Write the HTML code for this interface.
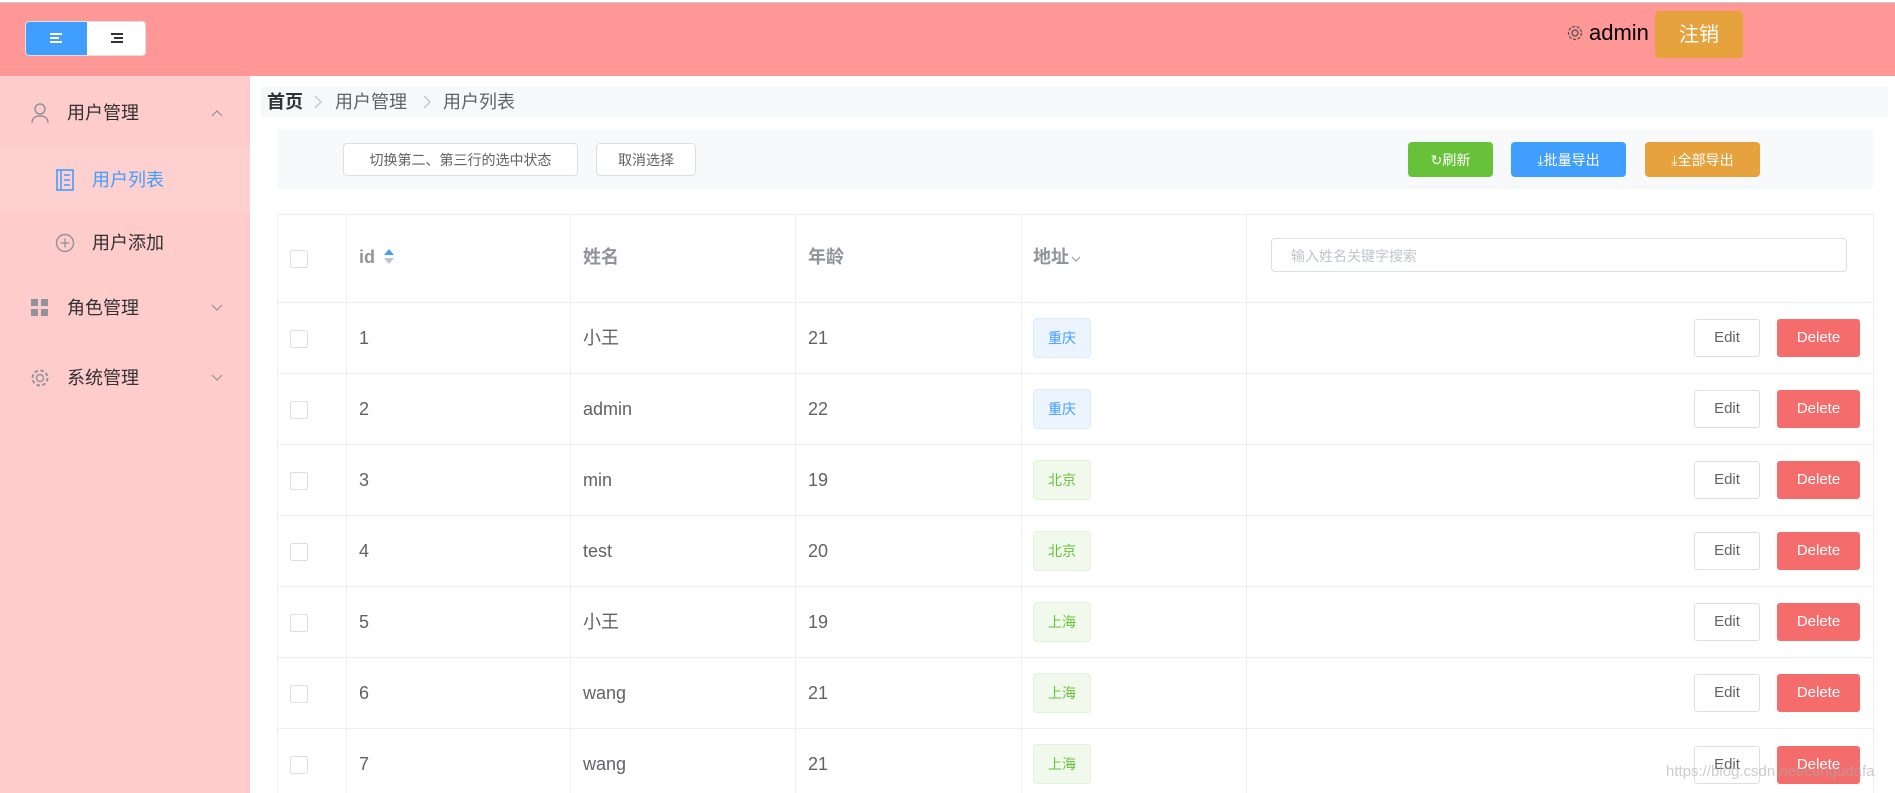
<!DOCTYPE html>
<html style="width:1895px;height:793px;overflow:hidden"><head><meta charset="utf-8"><style>
*{box-sizing:border-box;margin:0;padding:0}
body{width:1895px;height:793px;overflow:hidden;background:#fff;font-family:"Liberation Sans","Noto Sans CJK SC",sans-serif;position:relative;color:#606266;line-height:22px}
.a{position:absolute}
.hdr{left:0;top:0;width:1895px;height:76px;background:#ff9797;border-top:2px solid #fff;box-shadow:inset 0 1px 0 #ccc}
.side{left:0;top:76px;width:250px;height:717px;background:#ffcccc}
.mi{position:absolute;left:0;width:250px;font-size:18px;color:#303133;display:flex;align-items:center}
.btn{position:absolute;border-radius:4px;font-size:14px;display:flex;align-items:center;justify-content:center}
.cb{position:absolute;left:290px;width:18px;height:18px;border:1px solid #dcdfe6;border-radius:2px;background:#fff}
.txt{position:absolute;font-size:18px;color:#606266;height:22px;line-height:22px;overflow:visible;white-space:nowrap}
.tag{position:absolute;left:1033px;width:58px;height:40px;border-radius:4px;font-size:14px;display:flex;align-items:center;justify-content:center}
.blue{background:#ecf5ff;border:1px solid #d9ecff;color:#409eff}
.green{background:#f0f9eb;border:1px solid #e1f3d8;color:#67c23a}
.edit{position:absolute;left:1694px;width:66px;height:38px;border:1px solid #dcdfe6;border-radius:3px;background:#fff;font-size:15px;color:#606266;display:flex;align-items:center;justify-content:center}
.del{position:absolute;left:1777px;width:83px;height:38px;border-radius:3px;background:#f56c6c;font-size:15px;color:#fff;display:flex;align-items:center;justify-content:center}
.th{position:absolute;top:246px;font-size:18px;font-weight:bold;color:#909399;height:22px}
.vl{position:absolute;top:214px;width:1px;height:579px;background:#ebeef5}
.hl{position:absolute;left:277px;width:1597px;height:1px;background:#ebeef5}
</style></head><body>
<div class="a hdr"></div>
<div class="a" style="left:25px;top:21px;width:121px;height:35px;border-radius:4px;background:#fff;border:1px solid #dcdfe6;overflow:hidden">
 <div class="a" style="left:0;top:0;width:61px;height:35px;background:#409eff"></div>
 <svg class="a" style="left:24px;top:11px" width="14" height="12"><path d="M0 1h12M0 5h9M0 9h12" stroke="#fff" stroke-width="2"/></svg>
 <svg class="a" style="left:85px;top:11px" width="14" height="12"><path d="M0 1h12M3 5h9M0 9h12" stroke="#333" stroke-width="2"/></svg>
</div>
<svg class="a" style="left:1566px;top:24px" width="18" height="18" viewBox="0 0 18 18"><circle cx="9" cy="9" r="3" fill="none" stroke="#555" stroke-width="1.3"/><circle cx="9" cy="9" r="6.5" fill="none" stroke="#555" stroke-width="1.3" stroke-dasharray="3 1.6"/></svg>
<div class="a" style="left:1589px;top:21px;font-size:22px;color:#000;line-height:24px">admin</div>
<div class="btn" style="left:1655px;top:11px;width:88px;height:47px;background:#e6a23c;color:#fff;font-size:20px">注销</div>

<div class="a side"></div>
<div class="mi" style="top:80px;height:66px"><svg style="margin-left:30px" width="20" height="22" viewBox="0 0 20 22"><circle cx="10" cy="7" r="5" fill="none" stroke="#909399" stroke-width="1.5"/><path d="M2 21c0-5 3.5-7 8-7s8 2 8 7" fill="none" stroke="#909399" stroke-width="1.5"/></svg><span style="margin-left:17px">用户管理</span><svg style="position:absolute;left:211px" width="12" height="8"><path d="M1 7l5-5 5 5" fill="none" stroke="#909399" stroke-width="1.2"/></svg></div>
<div class="a" style="left:0;top:147px;width:250px;height:65px;background:#ffd0d0"></div>
<div class="mi" style="top:147px;height:65px;color:#409eff"><svg style="margin-left:56px" width="18" height="22" viewBox="0 0 18 22"><rect x="1" y="1" width="16" height="20" fill="none" stroke="#409eff" stroke-width="1.6"/><path d="M5 1v20M8 6h6M8 11h6M8 16h6" stroke="#409eff" stroke-width="1.5"/></svg><span style="margin-left:18px">用户列表</span></div>
<div class="mi" style="top:212px;height:62px"><svg style="margin-left:55px" width="20" height="20" viewBox="0 0 20 20"><circle cx="10" cy="10" r="8.5" fill="none" stroke="#909399" stroke-width="1.4"/><path d="M10 5.5v9M5.5 10h9" stroke="#909399" stroke-width="1.3"/></svg><span style="margin-left:17px">用户添加</span></div>
<div class="mi" style="top:276px;height:64px"><svg style="margin-left:31px" width="18" height="18"><rect x="0" y="0" width="7" height="7" fill="#909399"/><rect x="10" y="0" width="7" height="7" fill="#909399"/><rect x="0" y="10" width="7" height="7" fill="#909399"/><rect x="10" y="10" width="7" height="7" fill="#909399"/></svg><span style="margin-left:18px">角色管理</span><svg style="position:absolute;left:211px" width="12" height="8"><path d="M1 1l5 5 5-5" fill="none" stroke="#909399" stroke-width="1.2"/></svg></div>
<div class="mi" style="top:346px;height:64px"><svg style="margin-left:30px" width="20" height="20" viewBox="0 0 20 20"><circle cx="10" cy="10" r="3.5" fill="none" stroke="#909399" stroke-width="1.4"/><circle cx="10" cy="10" r="7.5" fill="none" stroke="#909399" stroke-width="2" stroke-dasharray="3.5 2.4"/></svg><span style="margin-left:17px">系统管理</span><svg style="position:absolute;left:211px" width="12" height="8"><path d="M1 1l5 5 5-5" fill="none" stroke="#909399" stroke-width="1.2"/></svg></div>

<div class="a" style="left:261px;top:87px;width:1627px;height:30px;background:#f7f8fa"></div>
<div class="a" style="left:267px;top:91px;font-size:18px;color:#303133;font-weight:bold">首页</div>
<svg class="a" style="left:314px;top:95px" width="8" height="14"><path d="M1 1l6 6-6 6" fill="none" stroke="#c0c4cc" stroke-width="1.3"/></svg>
<div class="a" style="left:335px;top:91px;font-size:18px;color:#606266">用户管理</div>
<svg class="a" style="left:423px;top:95px" width="8" height="14"><path d="M1 1l6 6-6 6" fill="none" stroke="#c0c4cc" stroke-width="1.3"/></svg>
<div class="a" style="left:443px;top:91px;font-size:18px;color:#606266">用户列表</div>

<div class="a" style="left:277px;top:129px;width:1596px;height:60px;background:#f8f9fb"></div>
<div class="btn" style="left:343px;top:143px;width:235px;height:33px;background:#fff;border:1px solid #dcdfe6;color:#606266">切换第二、第三行的选中状态</div>
<div class="btn" style="left:596px;top:143px;width:100px;height:33px;background:#fff;border:1px solid #dcdfe6;color:#606266">取消选择</div>
<div class="btn" style="left:1408px;top:142px;width:85px;height:35px;background:#67c23a;color:#fff">↻刷新</div>
<div class="btn" style="left:1511px;top:142px;width:115px;height:35px;background:#409eff;color:#fff">⤓批量导出</div>
<div class="btn" style="left:1645px;top:142px;width:115px;height:35px;background:#e6a23c;color:#fff">⤓全部导出</div>

<div class="vl" style="left:277px"></div><div class="vl" style="left:346px"></div><div class="vl" style="left:570px"></div><div class="vl" style="left:795px"></div><div class="vl" style="left:1021px"></div><div class="vl" style="left:1246px"></div><div class="vl" style="left:1873px"></div>
<div class="hl" style="top:214px"></div><div class="hl" style="top:302px"></div><div class="hl" style="top:373px"></div><div class="hl" style="top:444px"></div><div class="hl" style="top:515px"></div><div class="hl" style="top:586px"></div><div class="hl" style="top:657px"></div><div class="hl" style="top:728px"></div>

<div class="cb" style="top:250px"></div>
<div class="th" style="left:359px">id</div>
<svg class="a" style="left:383px;top:249px" width="12" height="16"><path d="M1 6l5-6 5 6z" fill="#409eff"/><path d="M1 9l5 6 5-6z" fill="#c0c4cc"/></svg>
<div class="th" style="left:583px">姓名</div>
<div class="th" style="left:808px">年龄</div>
<div class="th" style="left:1033px">地址</div>
<svg class="a" style="left:1071px;top:256px" width="10" height="6"><path d="M1 1l4 4 4-4" fill="none" stroke="#909399"/></svg>
<div class="a" style="left:1271px;top:238px;width:576px;height:34px;border:1px solid #dcdfe6;border-radius:4px;font-size:14px;color:#c0c4cc;padding:6px 0 0 19px">输入姓名关键字搜索</div>

<div class="cb" style="top:330px"></div><div class="txt" style="left:359px;top:327px">1</div><div class="txt" style="left:583px;top:327px">小王</div><div class="txt" style="left:808px;top:327px">21</div><div class="tag blue" style="top:318px">重庆</div><div class="edit" style="top:319px">Edit</div><div class="del" style="top:319px">Delete</div>
<div class="cb" style="top:401px"></div><div class="txt" style="left:359px;top:398px">2</div><div class="txt" style="left:583px;top:398px">admin</div><div class="txt" style="left:808px;top:398px">22</div><div class="tag blue" style="top:389px">重庆</div><div class="edit" style="top:390px">Edit</div><div class="del" style="top:390px">Delete</div>
<div class="cb" style="top:472px"></div><div class="txt" style="left:359px;top:469px">3</div><div class="txt" style="left:583px;top:469px">min</div><div class="txt" style="left:808px;top:469px">19</div><div class="tag green" style="top:460px">北京</div><div class="edit" style="top:461px">Edit</div><div class="del" style="top:461px">Delete</div>
<div class="cb" style="top:543px"></div><div class="txt" style="left:359px;top:540px">4</div><div class="txt" style="left:583px;top:540px">test</div><div class="txt" style="left:808px;top:540px">20</div><div class="tag green" style="top:531px">北京</div><div class="edit" style="top:532px">Edit</div><div class="del" style="top:532px">Delete</div>
<div class="cb" style="top:614px"></div><div class="txt" style="left:359px;top:611px">5</div><div class="txt" style="left:583px;top:611px">小王</div><div class="txt" style="left:808px;top:611px">19</div><div class="tag green" style="top:602px">上海</div><div class="edit" style="top:603px">Edit</div><div class="del" style="top:603px">Delete</div>
<div class="cb" style="top:685px"></div><div class="txt" style="left:359px;top:682px">6</div><div class="txt" style="left:583px;top:682px">wang</div><div class="txt" style="left:808px;top:682px">21</div><div class="tag green" style="top:673px">上海</div><div class="edit" style="top:674px">Edit</div><div class="del" style="top:674px">Delete</div>
<div class="cb" style="top:756px"></div><div class="txt" style="left:359px;top:753px">7</div><div class="txt" style="left:583px;top:753px">wang</div><div class="txt" style="left:808px;top:753px">21</div><div class="tag green" style="top:744px">上海</div><div class="edit" style="top:746px">Edit</div><div class="del" style="top:746px">Delete</div>
<div class="a" style="left:1666px;top:761px;font-size:15px;color:rgba(170,170,170,0.6);white-space:nowrap">https://blog.csdn.net/cungudafa</div>
</body></html>
